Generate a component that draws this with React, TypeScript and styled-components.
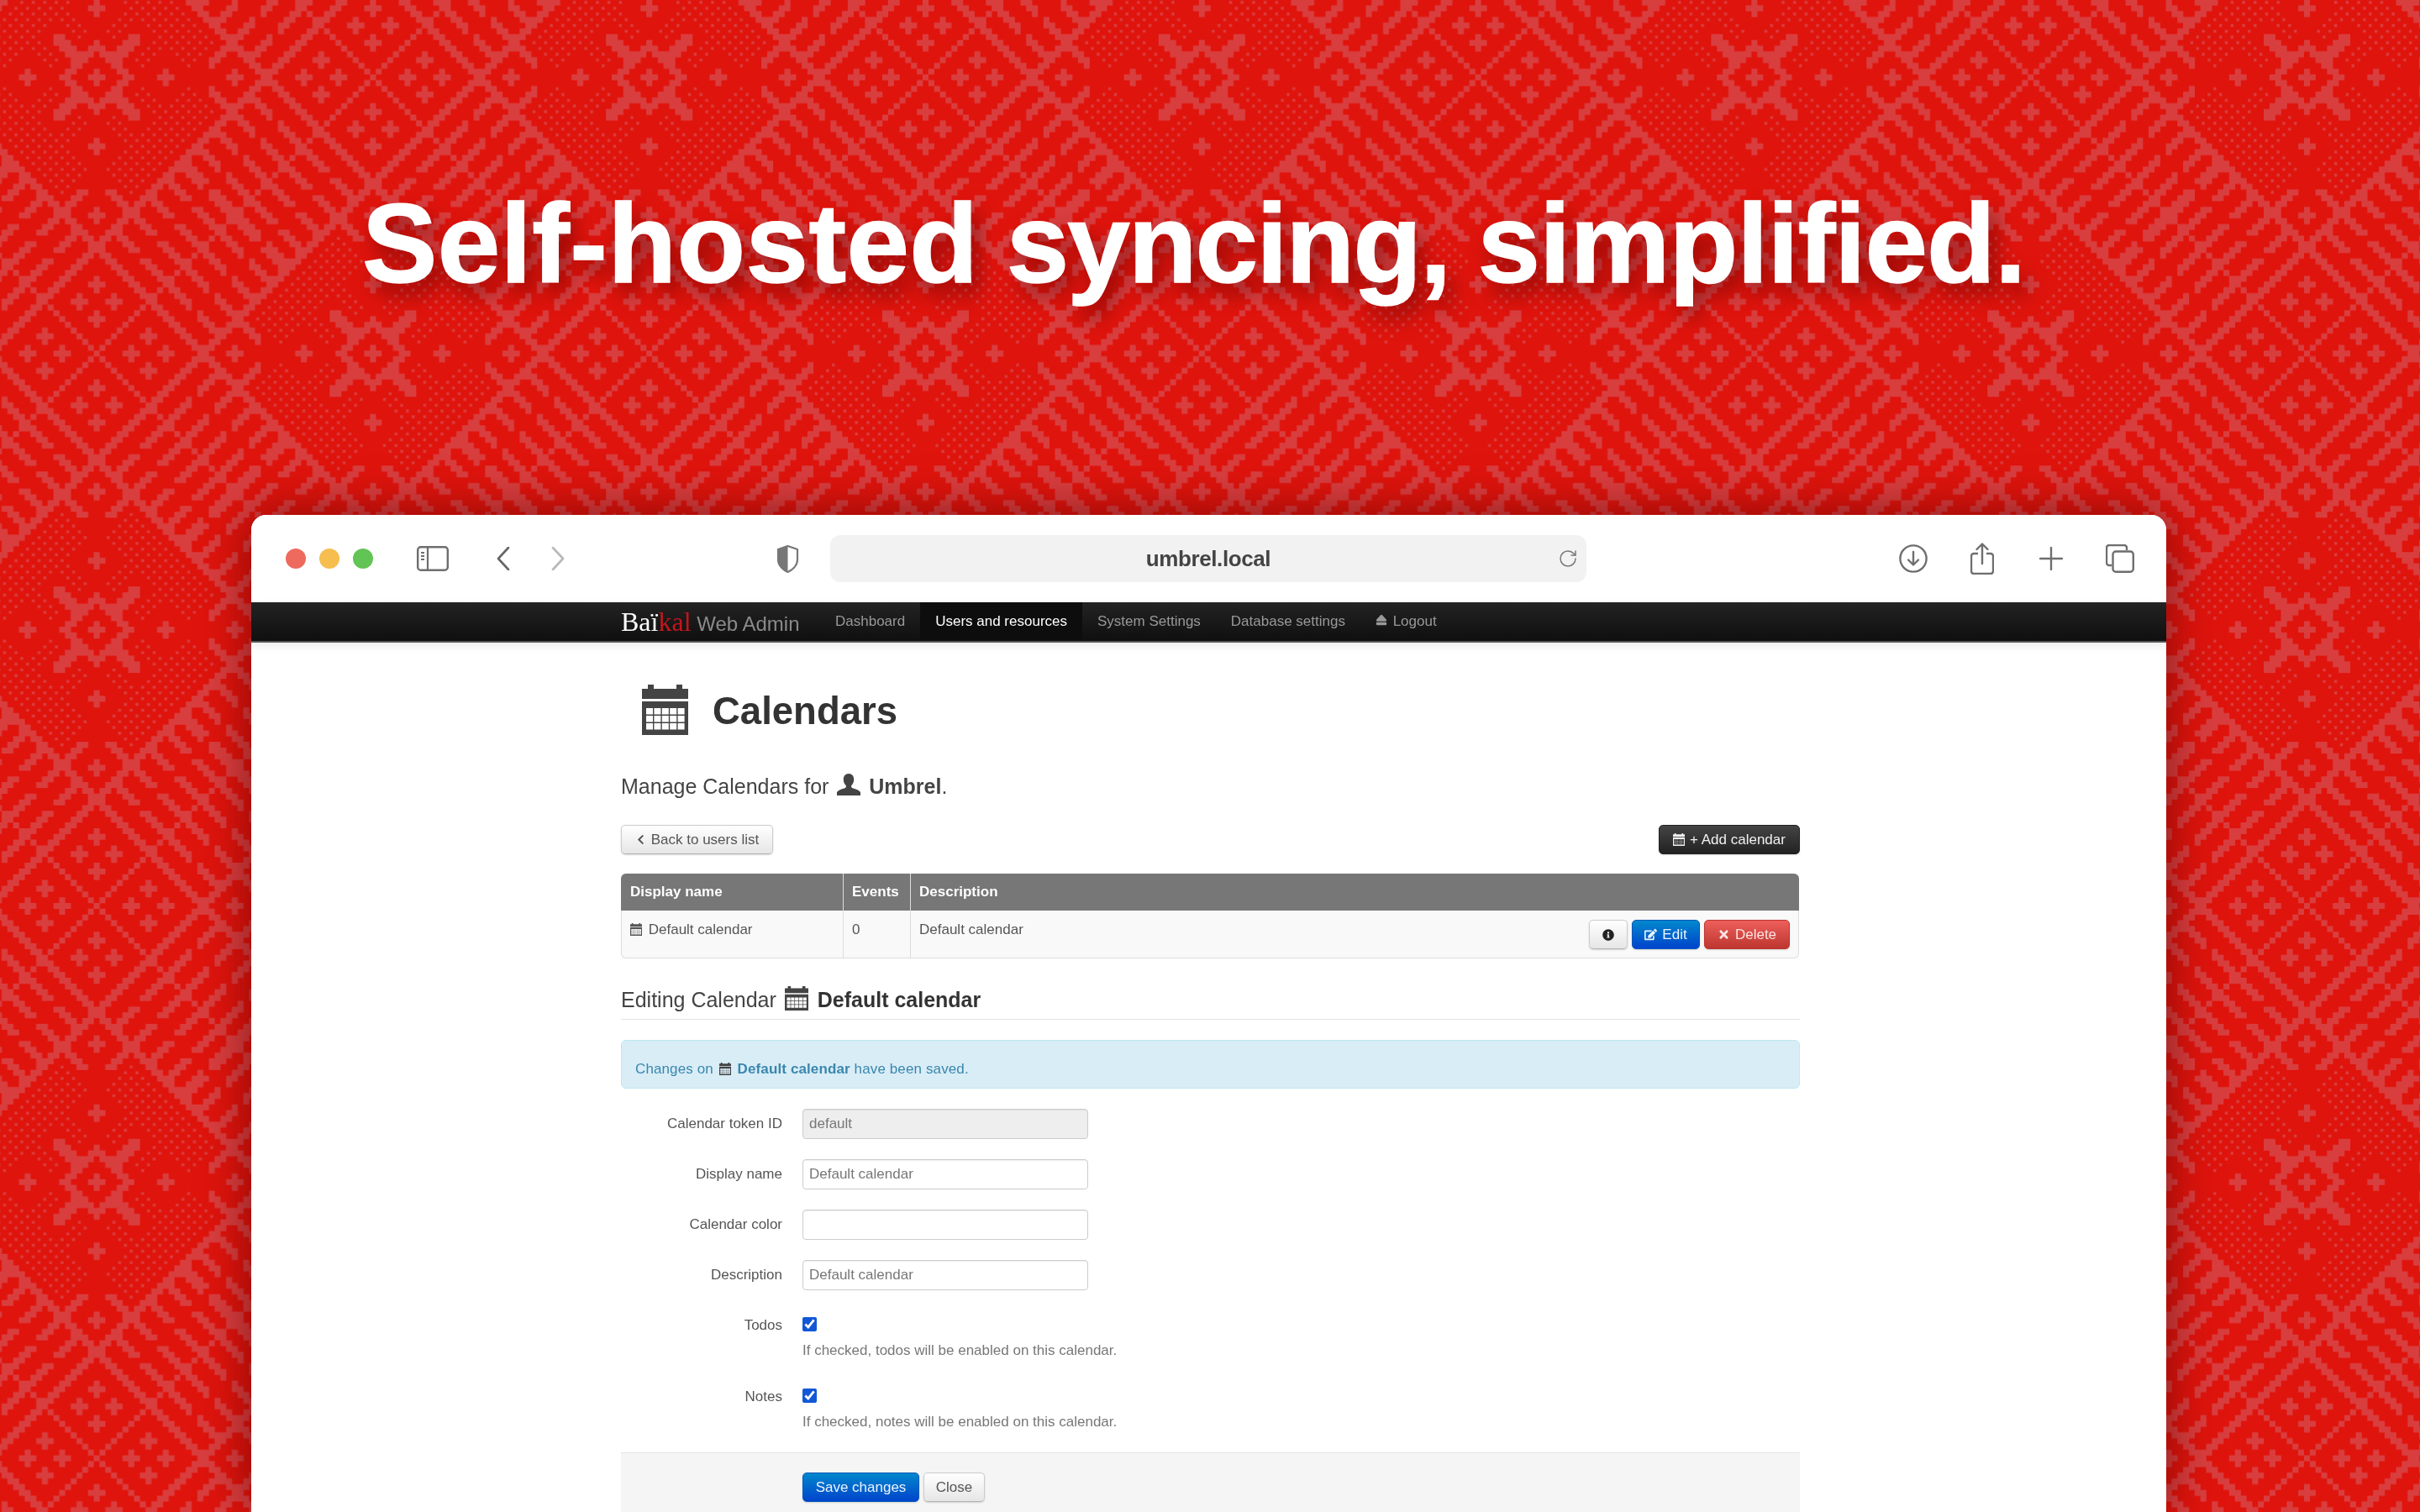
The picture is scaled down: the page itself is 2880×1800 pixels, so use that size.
import React from 'react';
import styled, { createGlobalStyle } from 'styled-components';
import { FaChevronLeft, FaEdit, FaInfoCircle, FaTimes, FaEject } from 'react-icons/fa';
import { RotateCw } from 'lucide-react';

const CELL = 6.85;
const TILE = CELL * 96;

const GlobalStyle = createGlobalStyle`
	html, body {
		margin: 0;
		padding: 0;
		background: #df140d;
	}
	* {
		box-sizing: border-box;
	}
`;

// woven background: one 96x96 cell tile, worked out in diagonal coordinates
const fold = (v: number) => Math.abs(((((v + 48) % 96) + 96) % 96) - 48);

const cellKind = (x: number, y: number): number => {
	const a = fold(x + y);
	const b = fold(x - y);
	const hi = Math.max(a, b);
	const lo = Math.min(a, b);
	const near = (p: number, q: number, r: number) =>
		Math.max(Math.abs(a - p), Math.abs(b - q)) <= r;

	if (a === 29 || a === 30 || b === 29 || b === 30) return 1;
	if (a === 48 || b === 48) return 1;

	if (lo > 30) {
		return [36, 42].some((p) => [36, 42].some((q) => near(p, q, 1))) ? 1 : 0;
	}
	if (hi > 30) {
		const bar = lo <= 1 || (lo + 1) % 6 <= 1;
		return bar && ((hi >= 31 && hi <= 37) || (hi >= 40 && hi <= 47)) ? 1 : 0;
	}
	if (near(0, 0, 1) || near(12, 12, 1) || near(24, 24, 1)) return 1;
	if (hi === 5 || hi === 6) return 1;
	if (lo <= 1 && hi >= 6 && hi <= 14) return 1;
	if ((lo === 17 || lo === 18) && hi >= 22 && hi <= 28) return 1;

	const clear = near(12, 12, 5) || lo >= 16 || hi < 9 || hi > 26;
	if (clear || (lo < 3 && hi < 17)) return 0;
	return (x + y) % 2 === 0 ? 2 : 0;
};

const buildWeave = () => {
	let d = '';
	for (let y = 0; y < 96; y++) {
		for (let x = 0; x < 96; x++) {
			const kind = cellKind(x, y);
			if (kind === 1) d += `M${x} ${y}h1.03v1.03h-1.03z`;
			if (kind === 2) d += `M${x + 0.25} ${y + 0.25}h.5v.5h-.5z`;
		}
	}
	return d;
};

const weavePath = buildWeave();

const Weave = () => (
	<WeaveSvg width='2880' height='1800'>
		<defs>
			<pattern
				id='weave'
				patternUnits='userSpaceOnUse'
				width={TILE}
				height={TILE}
				patternTransform={`translate(${115 - CELL / 2} ${92 - CELL / 2})`}
			>
				<g transform={`scale(${CELL})`}>
					<path d={weavePath} fill='#d93e3f' />
				</g>
			</pattern>
		</defs>
		<rect width='2880' height='1800' fill='url(#weave)' />
	</WeaveSvg>
);

const calendarHoles = () => {
	let d = 'M0 5h7V0h7v5h27V0h7v5h7v12H0zM0 20h55v40H0z';
	for (let j = 0; j < 3; j++) {
		for (let i = 0; i < 5; i++) {
			d += `M${5 + i * 9.4} ${28 + j * 9}h8v7.5h-8z`;
		}
	}
	return d;
};

const calendarPath = calendarHoles();

const CalendarIcon = ({ w, h }: { w: number; h: number }) => (
	<IconSvg viewBox='0 0 55 60' width={w} height={h} preserveAspectRatio='none'>
		<path d={calendarPath} fill='currentColor' fillRule='evenodd' />
	</IconSvg>
);

const UserIcon = () => (
	<IconSvg viewBox='0 0 28 26' width={28} height={26}>
		<path
			d='M14 0c4 0 6.2 3 6.2 7 0 3-1.2 5.6-3 7.2-.5 1.6.2 2.6 2 3.2 3.4 1.1 7.3 2.3 8.8 4.6V26H0v-4c1.500-2.300 5.400-3.500 8.800-4.600 1.800-.6 2.500-1.600 2-3.200-1.800-1.600-3-4.200-3-7.200 0-4 2.200-7 6.200-7z'
			fill='currentColor'
		/>
	</IconSvg>
);

const SidebarIcon = () => (
	<ToolSvg $gap={52} viewBox='0 0 38 30' width={38} height={30}>
		<rect x='1.2' y='1.2' width='35.600' height='27.600' rx='3.500' fill='none' stroke='#6e6e6e' strokeWidth='2.4' />
		<path d='M13 1v28' stroke='#6e6e6e' strokeWidth='2.200' />
		<path d='M5 8h4M5 12h4M5 16h4' stroke='#6e6e6e' strokeWidth='2' />
	</ToolSvg>
);

const Chevron = ({ gap, color, flip }: { gap: number; color: string; flip?: boolean }) => (
	<ToolSvg $gap={gap} viewBox='0 0 16 28' width={16} height={28}>
		<path
			d={flip ? 'M2 1l12 13L2 27' : 'M14 1L2 14l12 13'}
			fill='none'
			stroke={color}
			strokeWidth='2.600'
			strokeLinecap='round'
			strokeLinejoin='round'
		/>
	</ToolSvg>
);

const ShieldIcon = () => (
	<ToolSvg $gap={252} viewBox='0 0 27 33' width={27} height={33}>
		<path d='M13.500 1L2 5v12c0 8 7 13 11.500 15z' fill='#777' />
		<path
			d='M13.500 1L25 5v12c0 8-7 13-11.500 15C9 30 2 25 2 17V5z'
			fill='none'
			stroke='#777'
			strokeWidth='2.200'
			strokeLinejoin='round'
		/>
	</ToolSvg>
);

const DownloadIcon = () => (
	<ToolSvg $gap={372} viewBox='0 0 34 34' width={34} height={34}>
		<circle cx='17' cy='17' r='15.600' fill='none' stroke='#6e6e6e' strokeWidth='2.400' />
		<path d='M17 9v15M11 18.500l6 6 6-6' fill='none' stroke='#6e6e6e' strokeWidth='2.400' strokeLinecap='round' strokeLinejoin='round' />
	</ToolSvg>
);

const ShareIcon = () => (
	<ToolSvg $gap={51} viewBox='0 0 28 38' width={28} height={38}>
		<path d='M9 13H4a3 3 0 00-3 3v18a3 3 0 003 3h20a3 3 0 003-3V16a3 3 0 00-3-3h-5' fill='none' stroke='#6e6e6e' strokeWidth='2.400' />
		<path d='M14 25V2M7.500 8L14 1.500 20.500 8' fill='none' stroke='#6e6e6e' strokeWidth='2.400' strokeLinecap='round' strokeLinejoin='round' />
	</ToolSvg>
);

const PlusIcon = () => (
	<ToolSvg $gap={54} viewBox='0 0 28 28' width={28} height={28}>
		<path d='M14 1v26M1 14h26' stroke='#6e6e6e' strokeWidth='2.400' strokeLinecap='round' />
	</ToolSvg>
);

const TabsIcon = () => (
	<ToolSvg $gap={51} viewBox='0 0 34 34' width={34} height={34}>
		<path d='M7 25H4a3 3 0 01-3-3V4a3 3 0 013-3h18a3 3 0 013 3v3' fill='none' stroke='#6e6e6e' strokeWidth='2.400' />
		<rect x='8.500' y='8.500' width='24.300' height='24.300' rx='3.500' fill='none' stroke='#6e6e6e' strokeWidth='2.400' />
	</ToolSvg>
);

const navItems = ['Dashboard', 'Users and resources', 'System Settings', 'Database settings'];

const App: React.FC = () => {
	return (
		<Page>
			<GlobalStyle />
			<Weave />
			<Headline>
				<Word $tracking={0.35}>Self-hosted</Word> <Word $tracking={-2}>syncing,</Word>{' '}
				<Word $tracking={-1}>simplified.</Word>
			</Headline>
			<BrowserWindow>
				<Toolbar>
					<Light $color='#ee6a5f' />
					<Light $color='#f5be4f' />
					<Light $color='#62c454' />
					<SidebarIcon />
					<Chevron gap={57} color='#666' />
					<Chevron gap={49} color='#b8b8b8' flip />
					<ShieldIcon />
					<UrlBar>
						umbrel.local
						<ReloadSlot>
							<RotateCw size={24} strokeWidth={1.5} color='#777' />
						</ReloadSlot>
					</UrlBar>
					<DownloadIcon />
					<ShareIcon />
					<PlusIcon />
					<TabsIcon />
				</Toolbar>
				<NavBar>
					<NavInner>
						<Brand>
							<BrandSerif>
								Baï<BrandRed>kal</BrandRed>
							</BrandSerif>{' '}
							Web Admin
						</Brand>
						{navItems.map((item) => (
							<NavItem key={item} $active={item === 'Users and resources'}>
								{item}
							</NavItem>
						))}
						<NavItem>
							<FaEject size={14} /> Logout
						</NavItem>
					</NavInner>
				</NavBar>
				<Content>
					<TitleRow>
						<CalendarIcon w={55} h={60} />
						<Title>Calendars</Title>
					</TitleRow>
					<Lead>
						Manage Calendars for <UserIcon /> <strong>Umbrel</strong>.
					</Lead>
					<ActionRow>
						<Button $variant='plain' $width={181}>
							<FaChevronLeft size={13} /> Back to users list
						</Button>
						<Button $variant='dark' $width={168}>
							<CalendarIcon w={14} h={15} /> + Add calendar
						</Button>
					</ActionRow>
					<CalendarTable>
						<colgroup>
							<col width={264} />
							<col width={80} />
							<col />
						</colgroup>
						<thead>
							<tr>
								<Th>Display name</Th>
								<Th>Events</Th>
								<Th>Description</Th>
							</tr>
						</thead>
						<tbody>
							<tr>
								<Td>
									<CalendarIcon w={14} h={15} /> Default calendar
								</Td>
								<Td>0</Td>
								<Td>
									<RowCell>
										Default calendar
										<RowButtons>
											<Button $variant='plain' $width={46}>
												<FaInfoCircle size={14} color='#222' />
											</Button>
											<Button $variant='primary' $width={81}>
												<FaEdit size={15} /> Edit
											</Button>
											<Button $variant='danger' $width={102}>
												<FaTimes size={15} /> Delete
											</Button>
										</RowButtons>
									</RowCell>
								</Td>
							</tr>
						</tbody>
					</CalendarTable>
					<SectionHeading>
						Editing Calendar <CalendarIcon w={28} h={29} /> <strong>Default calendar</strong>
					</SectionHeading>
					<Alert>
						Changes on <CalendarIcon w={14} h={15} /> <strong>Default calendar</strong> have been saved.
					</Alert>
					<FormBody>
						<FormRow>
							<FormLabel>Calendar token ID</FormLabel>
							<TextInput value='default' disabled readOnly />
						</FormRow>
						<FormRow>
							<FormLabel>Display name</FormLabel>
							<TextInput value='Default calendar' readOnly />
						</FormRow>
						<FormRow>
							<FormLabel>Calendar color</FormLabel>
							<TextInput value='' readOnly />
						</FormRow>
						<FormRow>
							<FormLabel>Description</FormLabel>
							<TextInput value='Default calendar' readOnly />
						</FormRow>
						<CheckRow>
							<CheckLabel>Todos</CheckLabel>
							<div>
								<CheckBox type='checkbox' checked readOnly />
								<Help>If checked, todos will be enabled on this calendar.</Help>
							</div>
						</CheckRow>
						<CheckRow>
							<CheckLabel>Notes</CheckLabel>
							<div>
								<CheckBox type='checkbox' checked readOnly />
								<Help>If checked, notes will be enabled on this calendar.</Help>
							</div>
						</CheckRow>
					</FormBody>
					<FormActions>
						<Button $variant='primary' $width={139}>
							Save changes
						</Button>
						<Button $variant='plain' $width={73}>
							Close
						</Button>
					</FormActions>
				</Content>
			</BrowserWindow>
		</Page>
	);
};

const Page = styled.div`
	position: relative;
	width: 2880px;
	height: 1800px;
	overflow: hidden;
	background: #df140d;
	padding-top: 210px;
	font-family: 'Liberation Sans', Arial, sans-serif;
`;

const WeaveSvg = styled.svg`
	position: absolute;
	left: 0;
	top: 0;
`;

const Headline = styled.h1`
	position: relative;
	margin: 0;
	padding-left: 431px;
	height: 160px;
	font-size: 134px;
	line-height: 160px;
	font-weight: 700;
	word-spacing: -4px;
	white-space: nowrap;
	color: #fff;
	-webkit-text-stroke: 1.5px #fff;
	text-shadow: 8px 14px 24px rgba(80, 0, 0, 0.55);
`;

const Word = styled.span<{ $tracking: number }>`
	letter-spacing: ${(p) => p.$tracking}px;
`;

const BrowserWindow = styled.div`
	position: relative;
	width: 2279px;
	height: 1187px;
	margin: 243px 0 0 299px;
	background: #fff;
	border-radius: 18px 18px 0 0;
	overflow: hidden;
	filter: drop-shadow(0 0 30px rgba(70, 0, 0, 0.6));
`;

const Toolbar = styled.div`
	display: flex;
	align-items: center;
	height: 104px;
	padding-left: 41px;
	background: #fff;
`;

const Light = styled.span<{ $color: string }>`
	width: 24px;
	height: 24px;
	border-radius: 50%;
	margin-right: 16px;
	background: ${(p) => p.$color};
	&:nth-child(3) {
		margin-right: 0;
	}
`;

const ToolSvg = styled.svg<{ $gap: number }>`
	flex: none;
	margin-left: ${(p) => p.$gap}px;
`;

const UrlBar = styled.div`
	position: relative;
	width: 900px;
	height: 56px;
	margin-left: 37px;
	border-radius: 12px;
	background: #f2f2f2;
	text-align: center;
	font-size: 26px;
	line-height: 56px;
	font-weight: 700;
	letter-spacing: -0.4px;
	color: #444;
`;

const ReloadSlot = styled.span`
	position: absolute;
	right: 10px;
	top: 16px;
	display: flex;
`;

const NavBar = styled.div`
	height: 48px;
	background: linear-gradient(#232323, #0f0f0f);
	border-bottom: 2px solid #555;
	box-shadow: 0 4px 10px rgba(0, 0, 0, 0.08);
`;

const NavInner = styled.div`
	display: flex;
	align-items: stretch;
	width: 1402px;
	margin-left: 440px;
	height: 46px;
`;

const Brand = styled.div`
	width: 237px;
	font-size: 24px;
	line-height: 46px;
	color: #8a8a8a;
	white-space: nowrap;
`;

const BrandSerif = styled.span`
	font-family: 'Liberation Serif', 'Times New Roman', serif;
	font-size: 32px;
	color: #fff;
`;

const BrandRed = styled.span`
	color: #c4161c;
`;

const NavItem = styled.div<{ $active?: boolean }>`
	padding: 0 18px;
	font-size: 17px;
	line-height: 46px;
	white-space: nowrap;
	color: ${(p) => (p.$active ? '#fff' : '#999')};
	background: ${(p) => (p.$active ? '#0d0d0d' : 'transparent')};
	svg {
		margin-right: 2px;
	}
`;

const Content = styled.div`
	width: 1403px;
	margin-left: 440px;
	color: #333;
`;

const IconSvg = styled.svg`
	display: inline-block;
	vertical-align: -2px;
`;

const TitleRow = styled.div`
	display: flex;
	align-items: center;
	gap: 29px;
	height: 60px;
	margin-top: 50px;
	padding-left: 25px;
	color: #444;
`;

const Title = styled.h2`
	margin: 0;
	padding-top: 4px;
	font-size: 45.5px;
	font-weight: 700;
	color: #333;
`;

const Lead = styled.p`
	margin: 46px 0 0;
	font-size: 25px;
	line-height: 30px;
	color: #444;
	svg {
		color: #444;
		margin: 0 3px 0 3px;
	}
`;

const ActionRow = styled.div`
	display: flex;
	justify-content: space-between;
	margin-top: 31px;
`;

const buttonStyles: Record<string, string> = {
	plain: 'background: linear-gradient(#fff, #e6e6e6); color: #555; border-color: #ccc #ccc #b3b3b3;',
	dark: 'background: linear-gradient(#444, #222); color: #f0f0f0; border-color: #222;',
	primary: 'background: linear-gradient(#0088cc, #0044cc); color: #eaf3fb; border-color: #0055bb;',
	danger: 'background: linear-gradient(#ee5f5b, #bd362f); color: #fbe3e2; border-color: #bd362f;',
};

const Button = styled.button<{ $variant: string; $width: number }>`
	display: inline-flex;
	align-items: center;
	justify-content: center;
	gap: 6px;
	height: 35px;
	width: ${(p) => p.$width}px;
	padding: 0;
	border: 1px solid;
	border-radius: 5px;
	font-family: 'Liberation Sans', Arial, sans-serif;
	font-size: 17px;
	box-shadow: 0 1px 2px rgba(0, 0, 0, 0.15);
	${(p) => buttonStyles[p.$variant]}
`;

const CalendarTable = styled.table`
	width: 1402px;
	margin-top: 23px;
	border-collapse: separate;
	border-spacing: 0;
	table-layout: fixed;
	font-size: 17px;
`;

const Th = styled.th`
	height: 44px;
	padding: 0 10px;
	background: #777;
	color: #fff;
	font-size: 17px;
	text-align: left;
	border-left: 1px solid #ddd;
	&:first-child {
		border-left: 1px solid #777;
		border-top-left-radius: 6px;
	}
	&:last-child {
		border-top-right-radius: 6px;
	}
`;

const Td = styled.td`
	height: 57px;
	padding: 12px 10px 0;
	vertical-align: top;
	background: #f9f9f9;
	color: #555;
	line-height: 22px;
	border-left: 1px solid #ddd;
	border-bottom: 1px solid #ddd;
	svg {
		margin-right: 3px;
	}
	&:first-child {
		border-bottom-left-radius: 6px;
	}
	&:last-child {
		border-right: 1px solid #ddd;
		border-bottom-right-radius: 6px;
	}
`;

const RowCell = styled.div`
	display: flex;
	justify-content: space-between;
	align-items: flex-start;
	height: 22px;
`;

const RowButtons = styled.div`
	display: flex;
	gap: 5px;
	margin-top: -1px;
	svg {
		margin-right: 0;
	}
`;

const SectionHeading = styled.h3`
	margin: 30px 0 0;
	height: 43px;
	font-size: 25px;
	line-height: 39px;
	font-weight: 400;
	color: #444;
	border-bottom: 1px solid #e5e5e5;
	strong {
		color: #333;
	}
	svg {
		color: #444;
		vertical-align: -4px;
		margin: 0 4px 0 3px;
	}
`;

const Alert = styled.div`
	height: 58px;
	margin-top: 24px;
	padding: 22px 0 0 16px;
	border: 1px solid #bce8f1;
	border-radius: 6px;
	background: #d9edf7;
	color: #3a87ad;
	font-size: 17px;
	line-height: 24px;
	letter-spacing: 0.12px;
	svg {
		color: #444;
		margin: 0 3px 0 2px;
	}
`;

const FormBody = styled.div`
	display: flex;
	flex-direction: column;
	gap: 24px;
	margin-top: 24px;
`;

const FormRow = styled.div`
	display: grid;
	grid-template-columns: 192px 340px;
	column-gap: 24px;
	align-items: center;
`;

const CheckRow = styled(FormRow)`
	align-items: start;
	grid-template-columns: 192px 500px;
	margin-top: 8px;
	& + & {
		margin-top: 9px;
	}
`;

const FormLabel = styled.label`
	font-size: 17px;
	line-height: 24px;
	text-align: right;
	color: #555;
`;

const CheckLabel = styled(FormLabel)`
	line-height: 20px;
`;

const TextInput = styled.input`
	width: 340px;
	height: 36px;
	padding: 0 7px;
	border: 1px solid #ccc;
	border-radius: 4px;
	background: #fff;
	font-family: 'Liberation Sans', Arial, sans-serif;
	font-size: 17px;
	color: #777;
	box-shadow: inset 0 1px 1px rgba(0, 0, 0, 0.07);
	&:disabled {
		background: #eee;
		color: #777;
	}
`;

const CheckBox = styled.input`
	display: block;
	width: 17px;
	height: 17px;
	margin: 0 0 11px;
	accent-color: #1257d6;
`;

const Help = styled.div`
	font-size: 17px;
	line-height: 24px;
	color: #777;
`;

const FormActions = styled.div`
	display: flex;
	gap: 5px;
	margin-top: 24px;
	height: 100px;
	padding: 23px 0 0 216px;
	border-top: 1px solid #e5e5e5;
	background: #f5f5f5;
`;

export default App;
